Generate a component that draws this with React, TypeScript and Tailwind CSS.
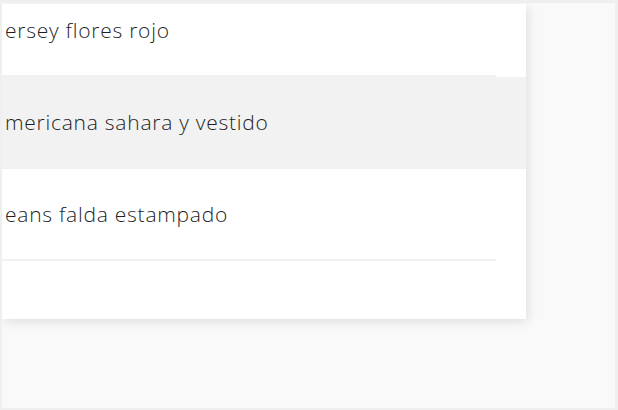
const items = [
  { label: 'ersey flores rojo', active: false },
  { label: 'mericana sahara y vestido', active: true },
  { label: 'eans falda estampado', active: false },
]

export default function App() {
  return (
    <div className="w-[618px] h-[410px] bg-[#f9f9f9] border-[#efefef] border-t-[3px] border-l-2 border-r-[3px] border-b-2 overflow-hidden">
      <div
        className="mt-px w-[524px] h-[315px] bg-white overflow-hidden shadow-[2px_3px_10px_rgba(0,0,0,0.1)]"
        style={{ fontFamily: '"Open Sans", "Noto Sans", sans-serif' }}
      >
        <ul className="-mt-[19px]">
          {items.map((item) => (
            <li key={item.label} className={item.active ? 'bg-[#f2f2f2]' : ''}>
              <div className="mr-[30px] h-[92px] border-b-2 border-[#f1f1f1] flex items-center pl-[3px] pt-[2px]">
                <span className="text-[21px] font-light text-[#1f1f1f] whitespace-nowrap tracking-[0.75px]">
                  {item.label}
                </span>
              </div>
            </li>
          ))}
        </ul>
      </div>
    </div>
  )
}
